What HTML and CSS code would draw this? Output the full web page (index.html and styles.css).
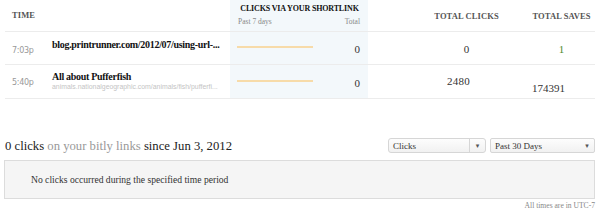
FILE: index.html
```html
<!DOCTYPE html>
<html>
<head>
<meta charset="utf-8">
<link rel="stylesheet" href="styles.css">
</head>
<body>
<div class="page">
  <div class="table">
    <div class="row head">
      <div class="c-time"><span class="th">TIME</span></div>
      <div class="c-title"></div>
      <div class="c-clicks">
        <div class="th-main">CLICKS VIA YOUR SHORTLINK</div>
        <div class="th-sub"><span>Past 7 days</span><span>Total</span></div>
      </div>
      <div class="c-total"><span class="th">TOTAL CLICKS</span></div>
      <div class="c-saves"><span class="th">TOTAL SAVES</span></div>
    </div>
    <div class="row r1">
      <div class="c-time"><span class="time">7:03p</span></div>
      <div class="c-title"><div class="title">blog.printrunner.com/2012/07/using-url-...</div></div>
      <div class="c-clicks"><span class="spark"></span><span class="num">0</span></div>
      <div class="c-total"><span class="num">0</span></div>
      <div class="c-saves"><span class="num green">1</span></div>
    </div>
    <div class="row r2">
      <div class="c-time"><span class="time">5:40p</span></div>
      <div class="c-title">
        <div class="title">All about Pufferfish</div>
        <div class="url">animals.nationalgeographic.com/animals/fish/pufferfi...</div>
      </div>
      <div class="c-clicks"><span class="spark"></span><span class="num">0</span></div>
      <div class="c-total"><span class="num up">2480</span></div>
      <div class="c-saves"><span class="num down">174391</span></div>
    </div>
  </div>

  <div class="summary">
    <h2 class="headline">0 clicks <span class="muted">on your bitly links</span> since Jun 3, 2012</h2>
    <div class="controls">
      <div class="select s-clicks"><span class="label">Clicks</span><span class="arrow">▾</span></div>
      <div class="select s-range"><span class="label">Past 30 Days</span><span class="arrow">▾</span></div>
    </div>
  </div>
  <div class="empty">No clicks occurred during the specified time period</div>
  <div class="foot">All times are in UTC-7</div>
</div>
</body>
</html>
```

FILE: styles.css
```css
html, body {
  margin: 0;
  padding: 0;
  background: #fff;
}
body {
  font-family: "Liberation Serif", "DejaVu Serif", serif;
  color: #222;
  width: 600px;
  height: 218px;
  overflow: hidden;
}
.page {
  padding: 0 5px 0 5px;
}
.table {
  display: flex;
  flex-direction: column;
}
.row {
  display: grid;
  grid-template-columns: 47px 178px 138px 160px 1fr;
  border-bottom: 1px solid #ececec;
}
.row.head { height: 31px; }
.row.r1 { height: 32px; }
.row.r2 { height: 33px; }
.row > div {
  display: flex;
  align-items: center;
}
.c-time { padding-left: 7px; }
.c-clicks {
  background: #f3f8fb;
  padding: 0 8px 0 7px;
  justify-content: space-between;
}
.c-total { justify-content: center; padding-left: 37px; }
.c-saves { justify-content: center; padding-left: 0; }

.th {
  font-size: 8.5px;
  font-weight: bold;
  color: #555;
  letter-spacing: 0.1px;
}
.head .c-time .th { margin-top: -2px; }
.head .c-clicks {
  flex-direction: column;
  align-items: stretch;
  justify-content: flex-start;
  padding-top: 4px;
}
.th-main {
  font-size: 8px;
  font-weight: bold;
  color: #111;
  text-align: center;
  letter-spacing: -0.15px;
  padding-left: 2px;
}
.th-sub {
  display: flex;
  justify-content: space-between;
  font-size: 7.5px;
  color: #888;
  margin-top: 4px;
  padding-left: 1px;
}
.time {
  font-size: 8px;
  color: #999;
  font-family: "DejaVu Sans", "Liberation Sans", sans-serif;
  letter-spacing: -0.3px;
}
.r1 .time { margin-top: 4px; }
.r2 .time { margin-top: 2px; }
.c-title {
  flex-direction: column;
  align-items: flex-start !important;
  justify-content: flex-start !important;
}
.r1 .c-title { padding-top: 7px; }
.r2 .c-title { padding-top: 6px; }
.title {
  font-size: 10px;
  font-weight: bold;
  color: #111;
  letter-spacing: -0.3px;
  white-space: nowrap;
}
.url {
  font-family: "Liberation Sans", Arial, sans-serif;
  font-size: 6.9px;
  color: #c4c4c4;
  margin-top: 1px;
  white-space: nowrap;
}
.spark {
  display: block;
  flex: 0 0 76px;
  align-self: flex-start;
  width: 76px;
  height: 2px;
  background-color: #f7dba9;
  margin-top: 14px;
}
.r2 .spark { margin-top: 15px; }
.num {
  font-size: 11px;
  color: #333;
}
.c-clicks .num { margin-top: 2px; }
.c-total .num, .c-saves .num { margin-top: 2px; }
.num.green { color: #4f8a2e; }
.num.up { margin-top: -2px; margin-right: 16px; letter-spacing: 0.2px; }
.num.down { margin-top: 12px; margin-right: 26px; }

.summary {
  display: flex;
  justify-content: space-between;
  align-items: flex-end;
  margin-top: 39px;
}
.headline {
  margin: 0;
  font-size: 12.7px;
  font-weight: normal;
  color: #222;
  line-height: 16px;
}
.muted { color: #999; }
.controls {
  display: flex;
  gap: 4px;
  padding-bottom: 1px;
}
.select {
  display: flex;
  align-items: center;
  justify-content: space-between;
  height: 13px;
  border: 1px solid #d6d6d6;
  background: linear-gradient(#fdfdfd, #f1f1f1);
  font-size: 9px;
  color: #333;
  box-sizing: content-box;
}
.select .label { padding-left: 4px; }
.s-clicks {
  width: 96px;
  border-radius: 3px;
}
.s-clicks .arrow {
  border-left: 1px solid #d6d6d6;
  height: 13px;
  width: 15px;
  display: flex;
  align-items: center;
  justify-content: center;
}
.s-range { width: 103px; border-radius: 2px; }
.s-range .arrow {
  width: 14px;
  display: flex;
  justify-content: center;
}
.arrow {
  font-size: 7px;
  color: #555;
  font-family: "DejaVu Sans", sans-serif;
}
.empty {
  margin-top: 6px;
  margin-left: -1px;
  height: 37px;
  border: 1px solid #dcdcdc;
  background: #f5f5f5;
  display: flex;
  align-items: center;
  padding-left: 26px;
  font-size: 9.6px;
  color: #333;
}
.foot {
  text-align: right;
  font-size: 7.6px;
  color: #888;
  margin-top: 2px;
}
```
